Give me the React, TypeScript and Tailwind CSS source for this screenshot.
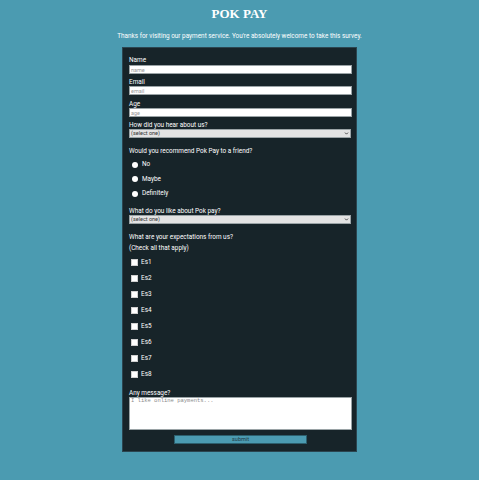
import { ChevronDown } from 'lucide-react';

const radios = ['No', 'Maybe', 'Definitely'];
const checks = ['Es1', 'Es2', 'Es3', 'Es4', 'Es5', 'Es6', 'Es7', 'Es8'];

function Label({ text, className = '' }: { text: string; className?: string }) {
  return <label className={`block h-[7px] text-[6.4px] leading-[7px] text-white ${className}`}>{text}</label>;
}

function TextInput({ placeholder }: { placeholder: string }) {
  return (
    <input
      placeholder={placeholder}
      className="block h-[9px] w-full border border-[#9aa3a6] bg-white px-[1px] text-[5.5px] leading-[7px] placeholder:text-[#9a9a9a] outline-none"
    />
  );
}

function Select() {
  return (
    <div className="relative">
      <select className="block h-[9px] w-full appearance-none border border-[#9aa3a6] bg-[#e3e3e3] px-[1px] text-[5.5px] leading-[7px] text-[#333] outline-none">
        <option>(select one)</option>
      </select>
      <ChevronDown className="pointer-events-none absolute right-[2px] top-[2px] h-[5px] w-[5px] text-[#333]" strokeWidth={4} />
    </div>
  );
}

export default function App() {
  return (
    <div
      className="flex min-h-screen flex-col items-center bg-[#4b9bb1]"
      style={{ fontFamily: 'Roboto, "Liberation Sans", sans-serif' }}
    >
      <h1
        className="mt-[7px] h-[14px] text-[13px] font-bold leading-[14px] text-white"
        style={{ fontFamily: '"Liberation Serif", serif' }}
      >
        POK PAY
      </h1>
      <p className="mt-[11px] h-[8px] text-[6.4px] leading-[8px] text-white">
        Thanks for visiting our payment service. You're absolutely welcome to take this survey.
      </p>

      <form className="mt-[7px] w-[235px] border border-[#2b4550] bg-[#172429] pb-[7px] pl-[6px] pr-[4px] pt-[9px]">
        <Label text="Name" />
        <div className="mt-[1px]"><TextInput placeholder="name" /></div>

        <Label text="Email" className="mt-[5px]" />
        <TextInput placeholder="email" />

        <Label text="Age" className="mt-[6px]" />
        <TextInput placeholder="age" />

        <Label text="How did you hear about us?" className="mt-[5px]" />
        <div className="pr-[1px]"><Select /></div>

        <Label text="Would you recommend Pok Pay to a friend?" className="mt-[10px]" />
        <div className="mt-[6px] flex flex-col gap-[7.5px] pl-[3px]">
          {radios.map((r) => (
            <label key={r} className="flex h-[7px] items-center gap-[4px] text-[6.4px] leading-[7px] text-white">
              <input type="radio" name="rec" className="h-[6px] w-[6px] appearance-none rounded-full bg-white" />
              {r}
            </label>
          ))}
        </div>

        <Label text="What do you like about Pok pay?" className="mt-[11px]" />
        <div className="pr-[1px]"><Select /></div>

        <Label text="What are your expectations from us?" className="mt-[10px]" />
        <Label text="(Check all that apply)" className="mt-[4px]" />
        <div className="mt-[7px] flex flex-col gap-[9px] pl-[2px]">
          {checks.map((c) => (
            <label key={c} className="flex h-[7px] items-center gap-[3px] text-[6.4px] leading-[7px] text-white">
              <input type="checkbox" className="h-[7px] w-[7px] appearance-none border border-[#cfcfcf] bg-white" />
              {c}
            </label>
          ))}
        </div>

        <Label text="Any message?" className="mt-[12px]" />
        <textarea
          placeholder="I like online payments..."
          className="block h-[33px] w-full resize-none border border-[#9aa3a6] bg-white px-[1px] text-[5.5px] leading-[6px] placeholder:text-[#8a8a8a] outline-none"
          style={{ fontFamily: '"Liberation Mono", monospace' }}
        />

        <div className="mt-[5px] flex justify-center">
          <button
            type="button"
            className="h-[9px] w-[133px] border border-[#2c5f6d] bg-[#4b9bb1] text-[5.5px] leading-[7px] text-[#1d3a44]"
          >
            submit
          </button>
        </div>
      </form>
    </div>
  );
}
